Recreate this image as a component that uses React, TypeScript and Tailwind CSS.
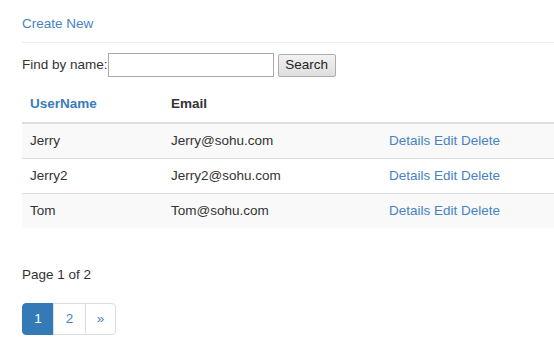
import React from 'react';

const users = [
  { name: 'Jerry', email: 'Jerry@sohu.com' },
  { name: 'Jerry2', email: 'Jerry2@sohu.com' },
  { name: 'Tom', email: 'Tom@sohu.com' },
];

export default function App() {
  const [query, setQuery] = React.useState('');

  return (
    <div className="min-h-screen bg-white pl-[22px] pt-[14px] text-[13.5px] leading-5 text-[#333] [font-family:'Liberation_Sans',Arial,sans-serif]">
      <p className="h-5">
        <a href="#" className="text-[#4683c2]">Create New</a>
      </p>
      <hr className="mt-[8px] border-t border-[#eee]" />

      <form className="mt-[10px] flex h-6 items-center" onSubmit={e => e.preventDefault()}>
        <label htmlFor="q">Find by name:</label>
        <input
          id="q"
          type="text"
          value={query}
          onChange={e => setQuery(e.target.value)}
          className="h-6 w-[166px] border border-[#a9a9a9] bg-white px-1 outline-none"
        />
        <button
          type="submit"
          className="ml-1 h-[23px] w-[58px] rounded-[2px] border border-[#adadad] bg-gradient-to-b from-[#f2f2f2] to-[#dedede] text-[13.5px] leading-none text-[#222]"
        >
          Search
        </button>
      </form>

      <table className="mt-[9px] w-full border-collapse text-left">
        <thead>
          <tr>
            <th className="w-[141px] border-b-2 border-[#ddd] p-2 font-bold">
              <a href="#" className="text-[#3a7bbd]">UserName</a>
            </th>
            <th className="w-[218px] border-b-2 border-[#ddd] p-2 font-bold">Email</th>
            <th className="border-b-2 border-[#ddd] p-2"></th>
          </tr>
        </thead>
        <tbody>
          {users.map((u, i) => (
            <tr key={u.name} className={i % 2 === 0 ? 'bg-[#f9f9f9]' : 'bg-white'}>
              <td className="border-t border-[#ddd] px-2 py-[7px] leading-5">{u.name}</td>
              <td className="border-t border-[#ddd] px-2 py-[7px] leading-5">{u.email}</td>
              <td className="border-t border-[#ddd] px-2 py-[7px] leading-5">
                <a href="#" className="text-[#4683c2]">Details</a>{' '}
                <a href="#" className="text-[#4683c2]">Edit</a>{' '}
                <a href="#" className="text-[#4683c2]">Delete</a>
              </td>
            </tr>
          ))}
        </tbody>
      </table>

      <p className="mt-[37px]">Page 1 of 2</p>

      <ul className="mt-[18px] flex h-8 w-fit">
        <li>
          <a href="#" className="flex h-8 w-8 items-center justify-center rounded-l-[4px] border border-[#337ab7] bg-[#337ab7] text-white">1</a>
        </li>
        <li>
          <a href="#" className="-ml-px flex h-8 w-[33px] items-center justify-center border border-[#ddd] bg-white text-[#4683c2]">2</a>
        </li>
        <li>
          <a href="#" className="-ml-px flex h-8 w-[31px] items-center justify-center rounded-r-[4px] border border-[#ddd] bg-white text-[#4683c2]">»</a>
        </li>
      </ul>
    </div>
  );
}
